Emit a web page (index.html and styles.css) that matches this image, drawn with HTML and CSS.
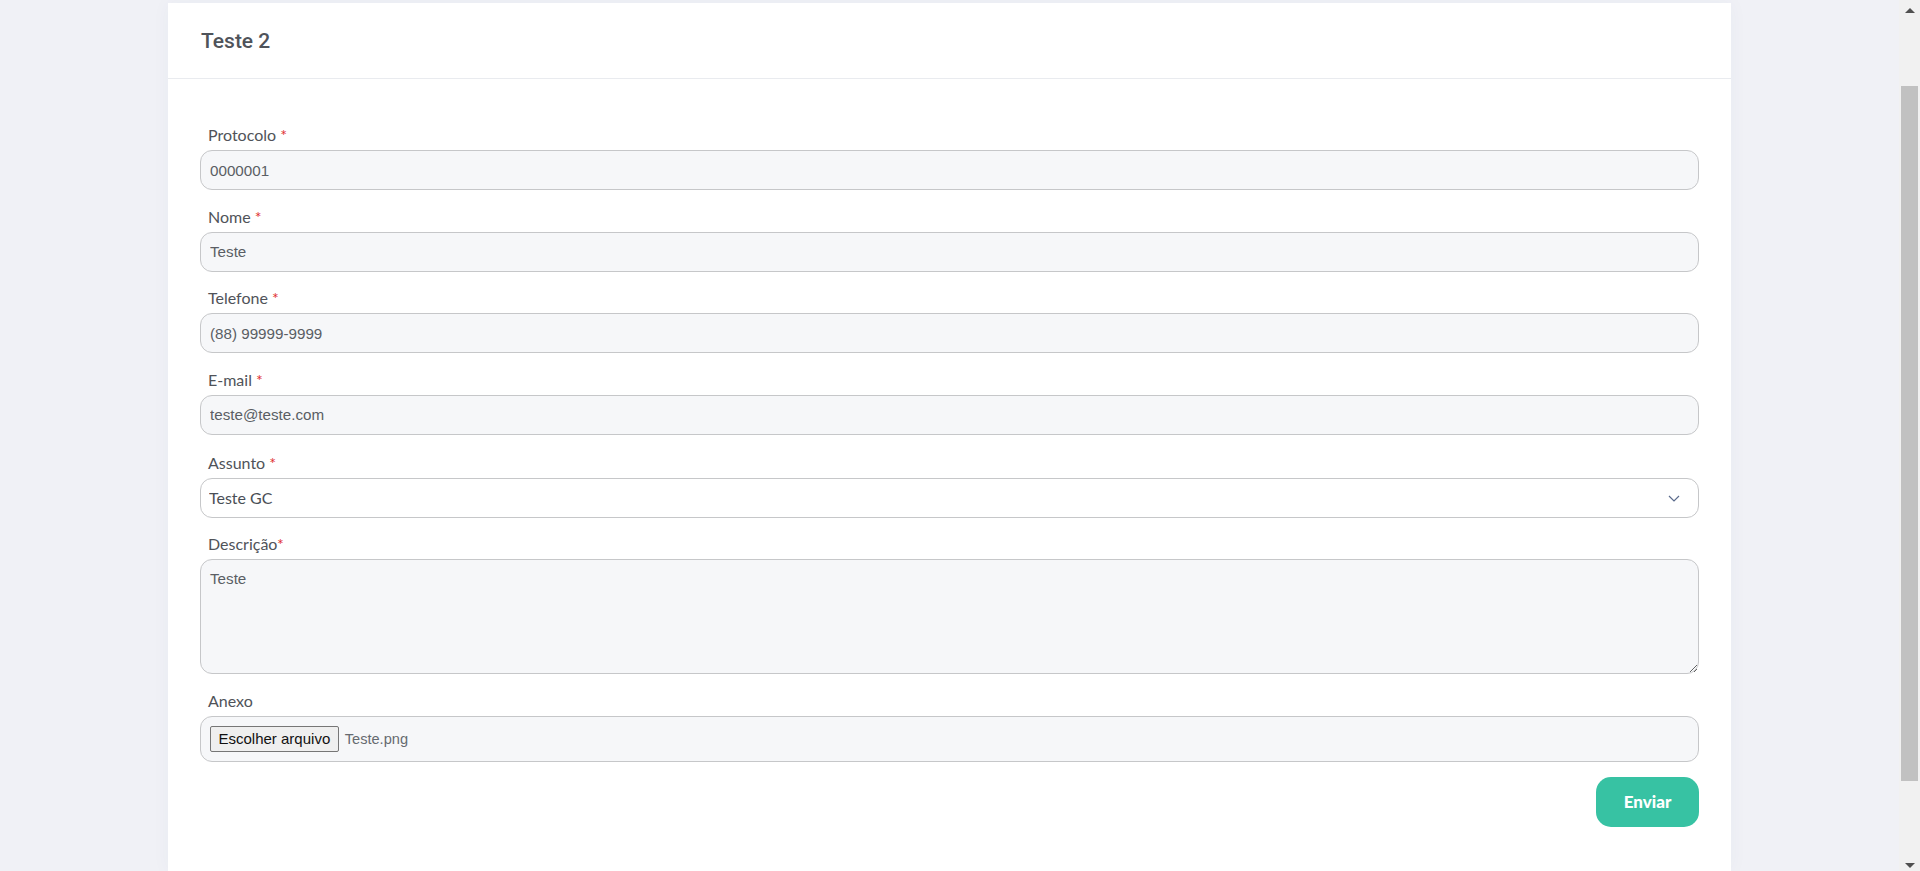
FILE: index.html
```html
<!DOCTYPE html>
<html lang="pt-BR">
<head>
    <meta charset="UTF-8">
    <meta name="viewport" content="width=device-width, initial-scale=1.0">
    <title>Teste 2</title>
    <link rel="stylesheet" href="styles.css">
</head>
<body>
    <div class="page">
        <div class="card">
            <div class="card-header">Teste 2</div>
            <form class="card-body">
                <div class="field">
                    <label>Protocolo <span class="req">*</span></label>
                    <input class="control" type="text" value="0000001">
                </div>
                <div class="field">
                    <label>Nome <span class="req">*</span></label>
                    <input class="control" type="text" value="Teste">
                </div>
                <div class="field">
                    <label>Telefone <span class="req">*</span></label>
                    <input class="control" type="text" value="(88) 99999-9999">
                </div>
                <div class="field">
                    <label>E-mail <span class="req">*</span></label>
                    <input class="control" type="text" value="teste@teste.com">
                </div>
                <div class="field field-select">
                    <label>Assunto <span class="req">*</span></label>
                    <div class="select-wrap">
                        <select class="control select">
                            <option>Teste GC</option>
                        </select>
                        <svg class="chevron" width="12" height="7" viewBox="0 0 12 7">
                            <path d="M1 1l5 5 5-5" fill="none" stroke="#5b6b8c" stroke-width="1.2"/>
                        </svg>
                    </div>
                </div>
                <div class="field">
                    <label>Descrição<span class="req">*</span></label>
                    <textarea class="control area">Teste</textarea>
                </div>
                <div class="field">
                    <label>Anexo</label>
                    <div class="control file-box">
                        <button type="button" class="file-btn">Escolher arquivo</button>
                        <span class="file-name">Teste.png</span>
                    </div>
                </div>
                <div class="actions">
                    <button type="button" class="btn-send">Enviar</button>
                </div>
            </form>
        </div>
    </div>
    <div class="scrollbar">
        <span class="arrow up"></span>
        <div class="thumb"></div>
        <span class="arrow down"></span>
    </div>
</body>
</html>
```

FILE: styles.css
```css
html, body {
    height: 100%;
}
body {
    margin: 0;
    display: flex;
    overflow: hidden;
    background: #f0f1f6;
    font-family: 'Lato', 'Liberation Sans', sans-serif;
    color: #4d4d4d;
}
.page {
    flex: 1;
    padding-top: 3px;
    background: #f0f1f6;
}
.card {
    width: 1563px;
    height: 100%;
    margin: 0 auto;
    background: #ffffff;
    box-shadow: 0 0 18px rgba(60, 70, 120, 0.04);
}
.card-header {
    height: 75px;
    padding: 0 33px;
    display: flex;
    align-items: center;
    font-family: 'Roboto', sans-serif;
    font-size: 21px;
    font-weight: 500;
    color: #4f535a;
    border-bottom: 1px solid #e9ebef;
}
.card-body {
    padding: 46px 32px 0;
}
.field {
    display: flex;
    flex-direction: column;
    gap: 5px;
    margin-bottom: 16.5px;
}
.field-select {
    padding-top: 2px;
}
.field label {
    padding-left: 8px;
    font-size: 16px;
    line-height: 20px;
    color: #505359;
}
.req {
    color: #e03131;
}
.control {
    box-sizing: border-box;
    width: 100%;
    height: 40px;
    padding: 0 9px;
    border: 1px solid #c6c7c9;
    border-radius: 12px;
    background: #f6f7f9;
    font-family: 'Liberation Sans', Arial, sans-serif;
    font-size: 15.2px;
    color: #5a5e64;
    outline: none;
}
.select-wrap {
    position: relative;
}
.select {
    appearance: none;
    -webkit-appearance: none;
    height: 39.5px;
    background: #ffffff;
    font-family: 'Lato', sans-serif;
    font-size: 16px;
    color: #4a4f56;
    padding-left: 8px;
}
.chevron {
    position: absolute;
    right: 19px;
    top: 17px;
}
.area {
    height: 115px;
    padding: 9px 9px;
    resize: vertical;
    line-height: 20px;
}
.file-box {
    height: 46px;
    display: flex;
    align-items: center;
    gap: 6px;
    padding: 0 9px;
}
.file-btn {
    height: 26px;
    padding: 0 7.5px;
    border: 1px solid #767676;
    border-radius: 2px;
    background: #efefef;
    font-family: 'Liberation Sans', Arial, sans-serif;
    font-size: 15px;
    color: #111;
}
.file-name {
    font-size: 14.6px;
    color: #666a70;
}
.actions {
    display: flex;
    justify-content: flex-end;
    margin-top: -1.5px;
}
.btn-send {
    width: 103px;
    height: 50px;
    border: 0;
    border-radius: 15px;
    background: #37c2a3;
    color: #ffffff;
    font-family: 'Lato', sans-serif;
    font-weight: 900;
    font-size: 17px;
}
.scrollbar {
    width: 21px;
    height: 100%;
    background: #f1f1f1;
    display: flex;
    flex-direction: column;
    align-items: center;
}
.arrow {
    width: 0;
    height: 0;
    border-left: 5px solid transparent;
    border-right: 5px solid transparent;
}
.arrow.up {
    margin-top: 8px;
    border-bottom: 5px solid #505050;
}
.arrow.down {
    margin-top: auto;
    margin-bottom: 3px;
    border-top: 5px solid #505050;
}
.thumb {
    width: 17px;
    height: 695px;
    margin-top: 73px;
    background: #c1c1c1;
}
```
